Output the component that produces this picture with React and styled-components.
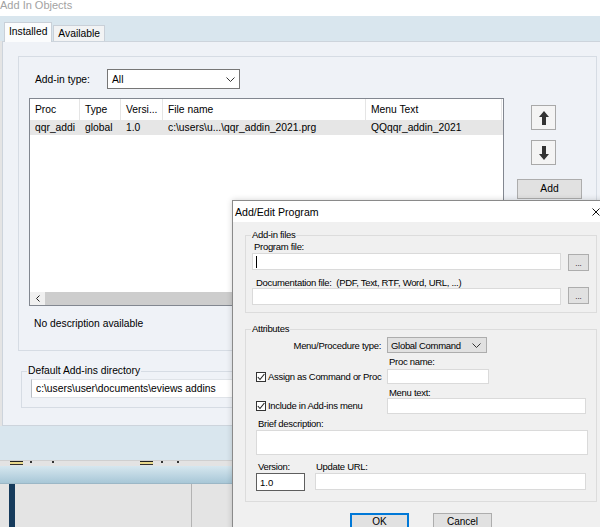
import React from 'react';
import styled, { createGlobalStyle } from 'styled-components';

const GlobalStyle = createGlobalStyle`
  html, body {
    margin: 0;
    padding: 0;
  }
  body {
    background: #e4e4e4;
    font-family: "Liberation Sans", Arial, sans-serif;
  }
  * {
    box-sizing: border-box;
  }
`;

const Chevron = () => (
  <svg width="9" height="5" viewBox="0 0 9 5">
    <polyline points="0.5,0.5 4.5,4.5 8.5,0.5" fill="none" stroke="#333" strokeWidth="1" />
  </svg>
);

const ArrowIcon = ({ down }) => (
  <svg width="10" height="14" viewBox="0 0 10 14" style={down ? { transform: 'rotate(180deg)' } : undefined}>
    <polygon points="5,0 10,6 7,6 7,14 3,14 3,6 0,6" fill="#333" />
  </svg>
);

const CheckMark = () => (
  <svg width="8" height="8" viewBox="0 0 8 8">
    <polyline points="0.8,4 3,6.5 7.4,1" fill="none" stroke="#222" strokeWidth="1.1" />
  </svg>
);

const CloseIcon = () => (
  <svg width="8" height="8" viewBox="0 0 8 8">
    <path d="M0.5 0.5 L7.5 7.5 M7.5 0.5 L0.5 7.5" stroke="#111" strokeWidth="1" />
  </svg>
);

const columns = [
  { title: 'Proc', w: 50 },
  { title: 'Type', w: 41 },
  { title: 'Versi...', w: 42 },
  { title: 'File name', w: 203 },
  { title: 'Menu Text', w: 136 },
];

const rowData = ['qqr_addi', 'global', '1.0', 'c:\\users\\u...\\qqr_addin_2021.prg', 'QQqqr_addin_2021'];

const App = () => {
  return (
    <Desktop>
      <GlobalStyle />
      <MainWindow>
        <TitleBar>Add In Objects</TitleBar>
        <TabStrip>
          <Tab $active>Installed</Tab>
          <Tab>Available</Tab>
        </TabStrip>

        <TabPanel>
          <GroupBox>
            <TypeRow>
              <FieldLabel $w={72}>Add-in type:</FieldLabel>
              <SelectBox>
                <span>All</span>
                <Chevron />
              </SelectBox>
            </TypeRow>

            <ListRow>
              <ListView>
                <ListHeader>
                  {columns.map((c) => (
                    <HeaderCell key={c.title} $w={c.w}>{c.title}</HeaderCell>
                  ))}
                </ListHeader>
                <ListItem>
                  {rowData.map((v, i) => (
                    <ItemCell key={i} $w={columns[i].w}>{v}</ItemCell>
                  ))}
                </ListItem>
                <ListFill />
                <HScroll>
                  <ScrollArrow>
                    <svg width="4" height="7" viewBox="0 0 4 7">
                      <polyline points="3.5,0.5 0.5,3.5 3.5,6.5" fill="none" stroke="#222" strokeWidth="1" />
                    </svg>
                  </ScrollArrow>
                  <ScrollThumb />
                </HScroll>
              </ListView>

              <SideButtons>
                <IconButton><ArrowIcon /></IconButton>
                <IconButton $mt={10}><ArrowIcon down /></IconButton>
                <PushButton>Add</PushButton>
              </SideButtons>
            </ListRow>

            <DescText>No description available</DescText>
          </GroupBox>

          <DirGroup>
            <DirLegend>Default Add-ins directory</DirLegend>
            <DirInput>c:\users\user\documents\eviews addins</DirInput>
          </DirGroup>
        </TabPanel>

        <BlueBand />
        <TaskStrip>
          <StubIcon />
          <StubDot $ml={7} />
          <StubDot $ml={20} />
          <StubIcon $ml={86} />
          <StubDot $ml={8} />
          <StubDot $ml={14} />
        </TaskStrip>
        <GradientBar />
        <BottomArea>
          <NavyBar />
          <Pane />
        </BottomArea>
      </MainWindow>

      <Dialog>
        <DialogTitle>
          <span>Add/Edit Program</span>
          <CloseIcon />
        </DialogTitle>
        <DialogBody>
          <Group $pl={6} $pb={7}>
            <Legend $ml={-1}>Add-in files</Legend>
            <DlgLabel $pl={2}>Program file:</DlgLabel>
            <FileRow>
              <TextBox $w={309} $h={17}><Caret /></TextBox>
              <BrowseButton $mt={1}>...</BrowseButton>
            </FileRow>
            <DlgLabel $pl={4} $mt={6} $lh={11}>Documentation file:&nbsp; (PDF, Text, RTF, Word, URL, ...)</DlgLabel>
            <FileRow>
              <TextBox $w={309} $h={17} />
              <BrowseButton $mt={-1}>...</BrowseButton>
            </FileRow>
          </Group>

          <Group $pl={10} $pb={10} $mt={10}>
            <Legend $ml={-5}>Attributes</Legend>
            <TypeLine>
              <RightLabel>Menu/Procedure type:</RightLabel>
              <Dropdown>
                <span>Global Command</span>
                <Chevron />
              </Dropdown>
            </TypeLine>

            <AttrGrid>
              <CheckCell $mb={2}>
                <CheckBox><CheckMark /></CheckBox>
                <span>Assign as Command or Proc</span>
              </CheckCell>
              <StackCell $mt={3}>
                <DlgLabel $pl={2}>Proc name:</DlgLabel>
                <TextBox $w={102} $h={15} $mt={1} />
              </StackCell>

              <CheckCell $mb={3}>
                <CheckBox><CheckMark /></CheckBox>
                <span>Include in Add-ins menu</span>
              </CheckCell>
              <StackCell $mt={3}>
                <DlgLabel $pl={2} $lh={11}>Menu text:</DlgLabel>
                <TextBox $w={199} $h={16} />
              </StackCell>
            </AttrGrid>

            <DlgLabel $pl={2} $mt={4}>Brief description:</DlgLabel>
            <TextBox $w={332} $h={25} />

            <BottomFields>
              <StackCell>
                <DlgLabel $pl={2}>Version:</DlgLabel>
                <TextBox $w={49} $h={18} $dark>1.0</TextBox>
              </StackCell>
              <StackCell $ml={10}>
                <DlgLabel $pl={1}>Update URL:</DlgLabel>
                <TextBox $w={271} $h={17} />
              </StackCell>
            </BottomFields>
          </Group>

          <ButtonRow>
            <DlgButton $default>OK</DlgButton>
            <DlgButton>Cancel</DlgButton>
          </ButtonRow>
        </DialogBody>
      </Dialog>
    </Desktop>
  );
};

export default App;

const Desktop = styled.div`
  position: relative;
  width: 600px;
  height: 527px;
  overflow: hidden;
  background: #e4e4e4;
`;

const MainWindow = styled.div`
  width: 620px;
  height: 527px;
  display: flex;
  flex-direction: column;
  font-size: 10.3px;
  color: #000;
`;

const TitleBar = styled.div`
  height: 16px;
  background: #fff;
  color: #a2a2a2;
  font-size: 11px;
  line-height: 10px;
  white-space: nowrap;
`;

const TabStrip = styled.div`
  height: 25px;
  background: #d9e6ee;
  display: flex;
  align-items: flex-end;
  padding-left: 4px;
`;

const Tab = styled.div`
  position: relative;
  z-index: 1;
  height: ${(p) => (p.$active ? 20 : 16)}px;
  margin-bottom: ${(p) => (p.$active ? -1 : 0)}px;
  margin-left: ${(p) => (p.$active ? 0 : 1)}px;
  padding: 0 4px;
  border: 1px solid #c9d0d8;
  border-bottom: none;
  background: ${(p) => (p.$active ? '#fbfcfd' : '#f2f3f4')};
  line-height: ${(p) => (p.$active ? 17 : 15)}px;
  white-space: nowrap;
`;

const TabPanel = styled.div`
  margin-left: 2px;
  height: 385px;
  border: 1px solid #cdd4dc;
  border-right: none;
  background: #eff2f7;
  padding: 14px 0 0 15px;
`;

const GroupBox = styled.div`
  width: 579px;
  height: 295px;
  border: 1px solid #d6dce4;
  display: flex;
  flex-direction: column;
`;

const TypeRow = styled.div`
  display: flex;
  align-items: center;
  height: 20px;
  margin: 12px 0 0 16px;
`;

const FieldLabel = styled.div`
  width: ${(p) => p.$w}px;
  white-space: nowrap;
`;

const SelectBox = styled.div`
  width: 133px;
  height: 20px;
  border: 1px solid #767676;
  background: #fff;
  display: flex;
  align-items: center;
  justify-content: space-between;
  padding: 0 4px 0 4px;
`;

const ListRow = styled.div`
  display: flex;
  align-items: flex-start;
  margin: 9px 0 0 10px;
`;

const ListView = styled.div`
  width: 475px;
  height: 208px;
  border: 1px solid #828790;
  background: #fff;
  display: flex;
  flex-direction: column;
  overflow: hidden;
`;

const ListHeader = styled.div`
  display: flex;
  height: 21px;
  flex-shrink: 0;
`;

const HeaderCell = styled.div`
  width: ${(p) => p.$w}px;
  flex-shrink: 0;
  border-right: 1px solid #e5e5e5;
  padding-left: 5px;
  line-height: 21px;
  white-space: nowrap;
`;

const ListItem = styled.div`
  display: flex;
  height: 15px;
  background: #e6e6e6;
  flex-shrink: 0;
`;

const ItemCell = styled.div`
  width: ${(p) => p.$w}px;
  flex-shrink: 0;
  padding-left: 5px;
  line-height: 15px;
  white-space: nowrap;
  overflow: hidden;
`;

const ListFill = styled.div`
  flex: 1;
`;

const HScroll = styled.div`
  height: 13px;
  display: flex;
  flex-shrink: 0;
  background: #f0f0f0;
`;

const ScrollArrow = styled.div`
  width: 15px;
  display: flex;
  align-items: center;
  justify-content: center;
`;

const ScrollThumb = styled.div`
  flex: 1;
  background: #cdcdcd;
`;

const SideButtons = styled.div`
  display: flex;
  flex-direction: column;
  align-items: flex-start;
  margin-left: 13px;
  padding-top: 7px;
`;

const IconButton = styled.div`
  width: 25px;
  height: 25px;
  margin: ${(p) => p.$mt || 0}px 0 0 14px;
  border: 1px solid #a9a9a9;
  background: #f4f4f4;
  display: flex;
  align-items: center;
  justify-content: center;
`;

const PushButton = styled.div`
  width: 65px;
  height: 20px;
  margin-top: 14px;
  border: 1px solid #adadad;
  background: #e1e1e1;
  text-align: center;
  line-height: 18px;
`;

const DescText = styled.div`
  margin: 11px 0 0 15px;
  line-height: 14px;
`;

const DirGroup = styled.fieldset`
  width: 580px;
  margin: 14px 0 0 3px;
  padding: 0 0 9px 9px;
  border: 1px solid #d6dce4;
  min-width: 0;
`;

const DirLegend = styled.legend`
  margin-left: -4px;
  padding: 0 1px;
  line-height: 12px;
  font-size: 10.3px;
`;

const DirInput = styled.div`
  margin-top: 2px;
  height: 19px;
  background: #fff;
  border: 1px solid #dfe3e8;
  border-left-color: #b9bec4;
  padding-left: 4px;
  line-height: 17px;
  white-space: nowrap;
`;

const BlueBand = styled.div`
  height: 34px;
  background: #d9e6ee;
`;

const TaskStrip = styled.div`
  height: 6px;
  background: #e3e3e3;
  border-top: 1px solid #cfcfcf;
  display: flex;
  align-items: flex-start;
  padding-left: 10px;
`;

const StubIcon = styled.div`
  width: 13px;
  height: 4px;
  margin-left: ${(p) => p.$ml || 0}px;
  border-top: 1px solid #222;
  border-bottom: 1px solid #333;
  background: #e9d98c;
`;

const StubDot = styled.div`
  width: 2px;
  height: 2px;
  margin-left: ${(p) => p.$ml || 0}px;
  background: #333;
`;

const GradientBar = styled.div`
  height: 18px;
  background: linear-gradient(#d6e7ef, #a8c7d7);
  border-bottom: 1px solid #9bb7c6;
`;

const BottomArea = styled.div`
  flex: 1;
  display: flex;
  padding-left: 9px;
  background: #e4e4e4;
`;

const NavyBar = styled.div`
  width: 6px;
  background: #163b5c;
`;

const Pane = styled.div`
  width: 177px;
  border-right: 1px solid #b3b3b3;
`;

/* dialog */

const Dialog = styled.div`
  position: absolute;
  left: 232px;
  top: 200px;
  width: 378px;
  height: 345px;
  border: 1px solid #8a8a8a;
  background: #f0f0f0;
  box-shadow: 0 0 6px rgba(0, 0, 0, 0.18);
  font-size: 9.5px;
  letter-spacing: -0.3px;
  color: #000;
`;

const DialogTitle = styled.div`
  height: 21px;
  background: #fff;
  display: flex;
  align-items: center;
  justify-content: space-between;
  padding: 0 9px 0 2px;
  font-size: 10.6px;
  letter-spacing: 0;
`;

const DialogBody = styled.div`
  padding: 7px 12px 0 12px;
`;

const Group = styled.fieldset`
  margin: ${(p) => p.$mt || 0}px 0 0 0;
  padding: 0 7px ${(p) => p.$pb}px ${(p) => p.$pl}px;
  border: 1px solid #dcdcdc;
  min-width: 0;
`;

const Legend = styled.legend`
  margin-left: ${(p) => p.$ml}px;
  padding: 0 1px;
  line-height: 12px;
  font-size: 9.5px;
`;

const DlgLabel = styled.div`
  padding-left: ${(p) => p.$pl || 0}px;
  margin-top: ${(p) => p.$mt || 0}px;
  line-height: ${(p) => p.$lh || 12}px;
  white-space: nowrap;
`;

const FileRow = styled.div`
  display: flex;
  align-items: flex-start;
  gap: 7px;
`;

const TextBox = styled.div`
  width: ${(p) => p.$w}px;
  height: ${(p) => p.$h}px;
  margin-top: ${(p) => p.$mt || 0}px;
  background: #fff;
  border: 1px solid ${(p) => (p.$dark ? '#5e5e5e' : '#dadada')};
  padding-left: 3px;
  display: flex;
  align-items: center;
  letter-spacing: 0;
`;

const Caret = styled.span`
  width: 1px;
  height: 12px;
  background: #000;
`;

const BrowseButton = styled.div`
  width: 21px;
  height: 17px;
  margin-top: ${(p) => p.$mt || 0}px;
  border: 1px solid #adadad;
  background: #e1e1e1;
  text-align: center;
  font-size: 8px;
  line-height: 18px;
  letter-spacing: 0;
`;

const TypeLine = styled.div`
  display: flex;
  align-items: center;
  gap: 6px;
  margin-top: 2px;
  height: 16px;
`;

const RightLabel = styled.div`
  width: 125px;
  text-align: right;
  white-space: nowrap;
`;

const Dropdown = styled.div`
  width: 100px;
  height: 16px;
  border: 1px solid #adadad;
  background: #e1e1e1;
  display: flex;
  align-items: center;
  justify-content: space-between;
  padding: 0 5px 0 3px;
  white-space: nowrap;
`;

const AttrGrid = styled.div`
  display: grid;
  grid-template-columns: 131px auto;
`;

const CheckCell = styled.div`
  align-self: end;
  display: flex;
  align-items: center;
  gap: 2px;
  margin-bottom: ${(p) => p.$mb || 0}px;
  white-space: nowrap;
`;

const CheckBox = styled.div`
  width: 10px;
  height: 10px;
  border: 1px solid #333;
  background: #fff;
  display: flex;
  align-items: center;
  justify-content: center;
`;

const StackCell = styled.div`
  display: flex;
  flex-direction: column;
  margin-top: ${(p) => p.$mt || 0}px;
  margin-left: ${(p) => p.$ml || 0}px;
`;

const BottomFields = styled.div`
  display: flex;
  margin-top: 6px;
`;

const ButtonRow = styled.div`
  display: flex;
  justify-content: center;
  gap: 24px;
  margin-top: 11px;
`;

const DlgButton = styled.div`
  width: 59px;
  height: 18px;
  border: 1px solid ${(p) => (p.$default ? '#0078d7' : '#adadad')};
  box-shadow: ${(p) => (p.$default ? 'inset 0 0 0 1px #0078d7' : 'none')};
  background: #e1e1e1;
  text-align: center;
  line-height: 15px;
  font-size: 10px;
  letter-spacing: 0;
`;
